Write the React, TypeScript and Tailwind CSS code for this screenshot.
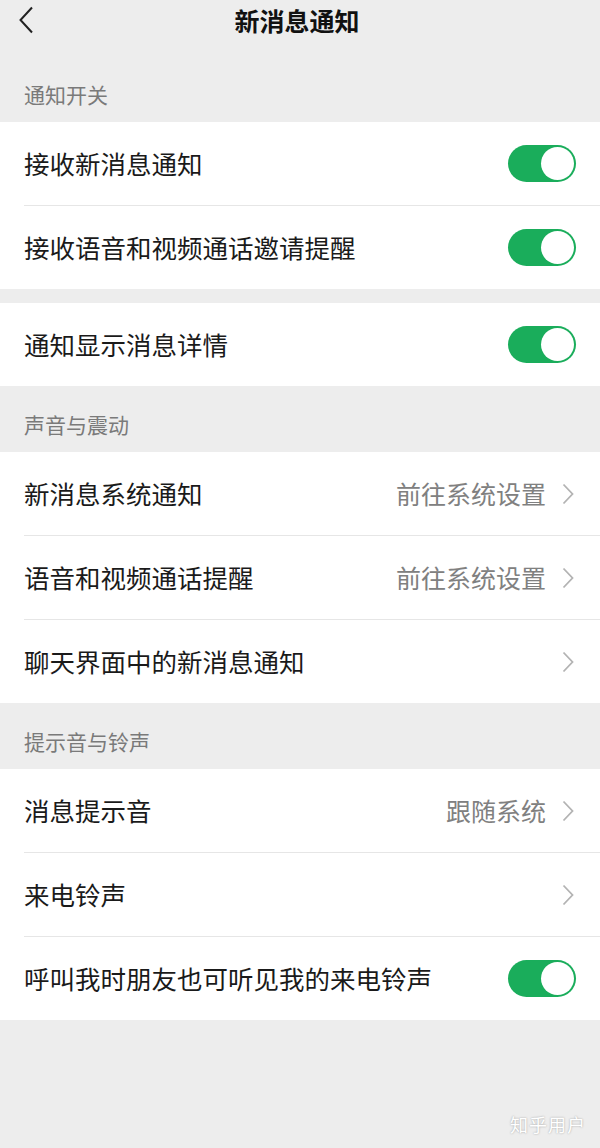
import React from 'react';

type Row = {
  label: string;
  toggle?: boolean;
  value?: string;
  arrow?: boolean;
};

const Toggle = () => (
  <div className="w-[68px] h-[37px] rounded-full bg-[#1aad5b] relative shrink-0">
    <div className="absolute right-[2px] top-[2px] w-[33px] h-[33px] rounded-full bg-white" />
  </div>
);

const Chevron = () => (
  <svg width="12" height="22" viewBox="0 0 12 22" className="shrink-0 ml-[16px] mr-[2px]">
    <path d="M1.5 1.5 L10.5 11 L1.5 20.5" fill="none" stroke="#b3b3b3" strokeWidth="1.8" />
  </svg>
);

const Group = ({ rows }: { rows: Row[] }) => (
  <div className="bg-white">
    {rows.map((r, i) => (
      <div key={r.label} className="pl-[24px]">
        <div
          className={
            'box-content h-[83px] flex items-center pr-[24px] ' +
            (i < rows.length - 1 ? 'border-b border-[#e6e6e6]' : '')
          }
        >
          <span className="flex-1 text-[25.5px] text-[#1a1a1a]">{r.label}</span>
          {r.value && <span className="text-[25px] text-[#808080]">{r.value}</span>}
          {r.arrow && <Chevron />}
          {r.toggle && <Toggle />}
        </div>
      </div>
    ))}
  </div>
);

const SectionTitle = ({ title }: { title: string }) => (
  <div className="h-[66px] flex items-center pl-[24px] pt-[12px] text-[21px] text-[#7a7a7a]">{title}</div>
);

const App = () => {
  return (
    <div
      className="w-[600px] h-[1148px] bg-[#ededed] flex flex-col relative"
      style={{ fontFamily: '"Noto Sans CJK SC", "Noto Sans", sans-serif' }}
    >
      {/* Top bar */}
      <div className="h-[56px] flex items-start justify-center relative">
        <svg width="16" height="28" viewBox="0 0 16 28" className="absolute left-[18px] top-[6px]">
          <path d="M14 1.5 L2.5 14 L14 26.5" fill="none" stroke="#222" strokeWidth="2" />
        </svg>
        <span className="text-[25px] font-bold text-[#111] leading-none mt-[8px] -ml-[6px]">新消息通知</span>
      </div>

      <SectionTitle title="通知开关" />
      <Group
        rows={[
          { label: '接收新消息通知', toggle: true },
          { label: '接收语音和视频通话邀请提醒', toggle: true },
        ]}
      />
      <div className="h-[14px]" />
      <Group rows={[{ label: '通知显示消息详情', toggle: true }]} />

      <SectionTitle title="声音与震动" />
      <Group
        rows={[
          { label: '新消息系统通知', value: '前往系统设置', arrow: true },
          { label: '语音和视频通话提醒', value: '前往系统设置', arrow: true },
          { label: '聊天界面中的新消息通知', arrow: true },
        ]}
      />

      <SectionTitle title="提示音与铃声" />
      <Group
        rows={[
          { label: '消息提示音', value: '跟随系统', arrow: true },
          { label: '来电铃声', arrow: true },
          { label: '呼叫我时朋友也可听见我的来电铃声', toggle: true },
        ]}
      />

      <div className="absolute right-[14px] bottom-[10px] text-[18px] text-white tracking-[1px] [text-shadow:0_0_2px_rgba(0,0,0,0.35)]">
        知乎用户
      </div>
    </div>
  );
};

export default App;
